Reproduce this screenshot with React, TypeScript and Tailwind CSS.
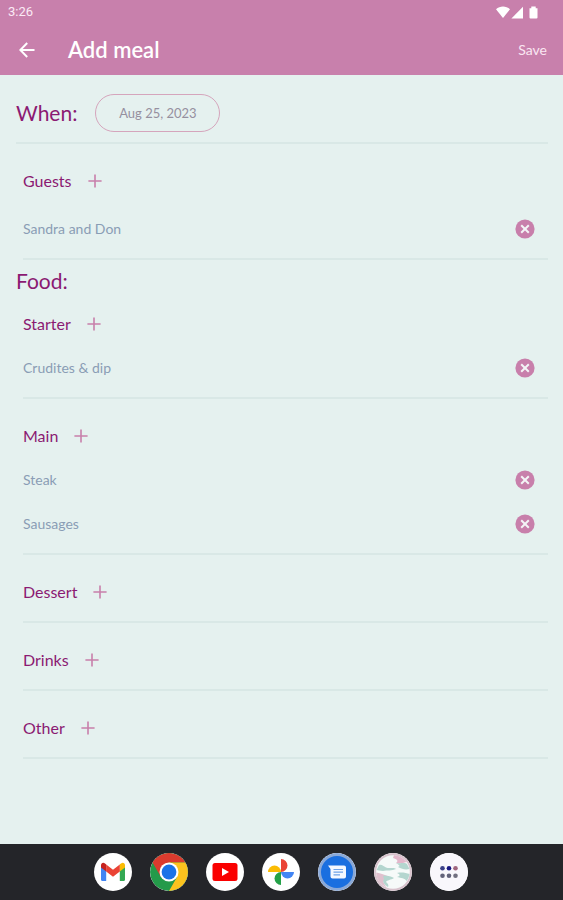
import { useState, type ReactNode } from "react";

type Course = { title: string; items: string[] };

const initialCourses: Course[] = [
  { title: "Starter", items: ["Crudites & dip"] },
  { title: "Main", items: ["Steak", "Sausages"] },
  { title: "Dessert", items: [] },
  { title: "Drinks", items: [] },
  { title: "Other", items: [] },
];

function PlusIcon() {
  return (
    <svg className="size-[14px]" viewBox="0 0 14 14" stroke="#c87fab" strokeWidth="1.6" aria-hidden="true">
      <path d="M7 0.4V13.6M0.4 7H13.6" />
    </svg>
  );
}

function RemoveIcon() {
  return (
    <svg className="size-5" viewBox="0 0 20 20" aria-hidden="true">
      <circle cx="10" cy="10" r="9.6" fill="#c87fab" />
      <path d="M6.2 6.2L13.8 13.8M13.8 6.2L6.2 13.8" stroke="#f3f4f6" strokeWidth="2" />
    </svg>
  );
}

function Section({
  title,
  items,
  className,
  itemClass = "",
  onRemove,
}: {
  title: string;
  items: string[];
  className: string;
  itemClass?: string;
  onRemove: (item: string) => void;
}) {
  return (
    <section className={`ml-[7px] border-b-2 border-[#d9e8e6] pb-[7px] ${className}`}>
      <div className="flex h-11 items-center gap-4">
        <h3 className="text-base leading-5 text-[#8b1a72]">{title}</h3>
        <button type="button" aria-label={`Add to ${title}`}>
          <PlusIcon />
        </button>
      </div>
      <ul className={itemClass}>
        {items.map((item) => (
          <li key={item} className="flex h-11 items-center justify-between pr-[13px]">
            <span className="text-sm leading-5 text-[#8a9db5]">{item}</span>
            <button type="button" aria-label={`Remove ${item}`} onClick={() => onRemove(item)}>
              <RemoveIcon />
            </button>
          </li>
        ))}
      </ul>
    </section>
  );
}

function AppIcon({ label, children }: { label: string; children: ReactNode }) {
  return (
    <button type="button" aria-label={label} className="size-[38px] overflow-hidden rounded-full bg-white">
      <svg viewBox="0 0 38 38" className="size-full" aria-hidden="true">
        {children}
      </svg>
    </button>
  );
}

function Dock() {
  return (
    <nav aria-label="Apps" className="flex h-14 items-center justify-center gap-[18px] bg-[#242529] pr-0.5">
      <AppIcon label="Gmail">
        <path d="M7 12.5V26.5Q7 28 8.5 28H12.2V16.2L7 12.2Z" fill="#4285f4" />
        <path d="M25.8 16.2V28H29.5Q31 28 31 26.5V12.2Z" fill="#34a853" />
        <path d="M25.8 11.3L27 10.4C29 9 31 10.2 31 12.5V14.5L25.8 18.6Z" fill="#fbbc04" />
        <path d="M12.2 11.5L19 16.7L25.8 11.5V18.6L19 23.8L12.2 18.6Z" fill="#ea4335" />
        <path d="M7 12.5C7 10.2 9 9 11 10.4L12.2 11.4V18.6L7 14.5Z" fill="#c5221f" />
      </AppIcon>
      <AppIcon label="Chrome">
        <circle cx="19" cy="19" r="19" fill="#249a4a" />
        <path d="M2.55 9.5A19 19 0 0 1 35.45 9.5H19L10.8 23.7Z" fill="#db3b2e" />
        <path d="M35.45 9.5A19 19 0 0 1 19 38L27.2 23.8L19 9.5Z" fill="#fcc31e" />
        <circle cx="19" cy="19" r="9.5" fill="#fff" />
        <circle cx="19" cy="19" r="7.4" fill="#1a73e8" />
      </AppIcon>
      <AppIcon label="YouTube">
        <rect x="6.5" y="10" width="25" height="18" rx="2.5" fill="#fa0000" />
        <path d="M16 15L23 19L16 23Z" fill="#fff" />
      </AppIcon>
      <AppIcon label="Photos">
        <path d="M19 19V6A6.5 6.5 0 0 1 19 19Z" fill="#ea4335" />
        <path d="M19 19H32A6.5 6.5 0 0 1 19 19Z" fill="#4285f4" />
        <path d="M19 19V32A6.5 6.5 0 0 1 19 19Z" fill="#24a148" />
        <path d="M19 19H6A6.5 6.5 0 0 1 19 19Z" fill="#fbbc04" />
      </AppIcon>
      <AppIcon label="Messages">
        <circle cx="19" cy="19" r="19" fill="#8aa9d8" />
        <circle cx="19" cy="19" r="16" fill="#1a6fe0" />
        <path d="M10 12.4H26Q28 12.4 28 14.4V23.5Q28 25.5 26 25.5H14.5Q12.5 25.5 12.5 23.5V16Z" fill="#f4f8ff" />
        <path d="M15.5 16.5H25M15.5 19.2H25M15.5 21.9H22" stroke="#6ea2e8" strokeWidth="1.2" />
      </AppIcon>
      <AppIcon label="Meal planner">
        <circle cx="19" cy="19" r="19" fill="#d8c3cd" />
        <circle cx="19" cy="19" r="16.8" fill="#f6faf9" />
        <path d="M20 2.2A16.8 16.8 0 0 1 32.5 9C29 10 26 11 22 10C25 8 23 6 19 5Z" fill="#e3b7cb" />
        <path d="M22 10C27 11 31 9 33 11L35.5 16C31 17 28 16 24 14C27 13 25 12 22 10Z" fill="#b4d6cf" />
        <path d="M5 12C8 11 9 13 12 14.5C15 16 20 14 22 16C18 18 13 17 9 18C6 18 4 17 2.6 17Z" fill="#b4d6cf" />
        <path d="M2.2 20C5 19 9 22 14 23C17 24 15 26 11 27C8 28 10 31 13 34.5A16.8 16.8 0 0 1 2.2 20Z" fill="#e0c0ce" />
        <path d="M9 23C14 22 18 24 20 25C17 27 13 27 12 29C14 31 15 32 14 34C10 31 8 29 10 26Z" fill="#b4d6cf" />
        <path d="M23 20C28 19 32 20 35.5 21C35 24 34 26 32.5 28C31 25 27 25 23 24C27 23 26 21 23 20Z" fill="#b4d6cf" />
      </AppIcon>
      <AppIcon label="All apps">
        <circle cx="19" cy="19" r="19" fill="#f9f7fc" />
        <circle cx="12.5" cy="15.2" r="2.3" fill="#3a3f88" />
        <circle cx="19" cy="15.2" r="2.3" fill="#171783" />
        <circle cx="25.5" cy="15.2" r="2.3" fill="#a0657f" />
        <circle cx="12.5" cy="22.8" r="2.3" fill="#62627a" />
        <circle cx="19" cy="22.8" r="2.3" fill="#62627a" />
        <circle cx="25.5" cy="22.8" r="2.3" fill="#716f80" />
      </AppIcon>
    </nav>
  );
}

export default function App() {
  const [guests, setGuests] = useState(["Sandra and Don"]);
  const [courses, setCourses] = useState(initialCourses);

  const removeFood = (title: string, item: string) =>
    setCourses((all) =>
      all.map((c) => (c.title === title ? { ...c, items: c.items.filter((i) => i !== item) } : c)),
    );

  return (
    <div className="flex min-h-screen flex-col bg-[#e5f1ef] font-['Lato',sans-serif]">
      <header className="bg-[#c880ac] text-white">
        <div className="flex h-6 items-center justify-between pr-[25px] pl-2">
          <span className="font-['Roboto',sans-serif] text-[13px] leading-4 text-[#fbeaf5]">3:26</span>
          <svg className="h-[13px] w-[42px]" viewBox="0 0 42 13" fill="#fff" aria-hidden="true">
            <path d="M0 3.2C4-0.4 10-0.4 14 3.2L7 12Z" />
            <path d="M27 0.8V12.4H15.4Z" />
            <path d="M33.5 2.3H35.3V0.6H39.7V2.3H41.5V11.6Q41.5 12.5 40.5 12.5H34.5Q33.5 12.5 33.5 11.6Z" />
          </svg>
        </div>
        <div className="flex h-[51px] items-center pr-4 pl-[19px]">
          <button type="button" aria-label="Back">
            <svg className="size-4" viewBox="0 0 16 16" fill="none" stroke="#fff" strokeWidth="2" aria-hidden="true">
              <path d="M15.5 8H2M8.2 1L1.3 8L8.2 15" />
            </svg>
          </button>
          <h1 className="ml-[33px] text-[22px] leading-7 font-semibold">Add meal</h1>
          <button type="button" className="ml-auto text-sm leading-5 text-[#fae6f2]">
            Save
          </button>
        </div>
      </header>

      <main className="flex-1 pr-[15px] pl-4">
        <div className="flex items-center gap-[18px] border-b-2 border-[#d9e8e6] pt-[19px] pb-2.5">
          <h2 className="text-[21px] leading-7 text-[#8b1a72]">When:</h2>
          <button
            type="button"
            className="h-[38px] w-[125px] rounded-full border border-[#d5a5bc] text-[13px] leading-5 text-[#96909f]"
          >
            Aug 25, 2023
          </button>
        </div>

        <Section
          title="Guests"
          items={guests}
          className="pt-[15px]"
          itemClass="pt-1"
          onRemove={(item) => setGuests((all) => all.filter((g) => g !== item))}
        />

        <h2 className="flex h-[42px] items-center text-[21px] leading-7 text-[#8b1a72]">Food:</h2>
        {courses.map((course, i) => (
          <Section
            key={course.title}
            title={course.title}
            items={course.items}
            className={i === 0 ? "" : "pt-[15px]"}
            onRemove={(item) => removeFood(course.title, item)}
          />
        ))}
      </main>

      <Dock />
    </div>
  );
}
